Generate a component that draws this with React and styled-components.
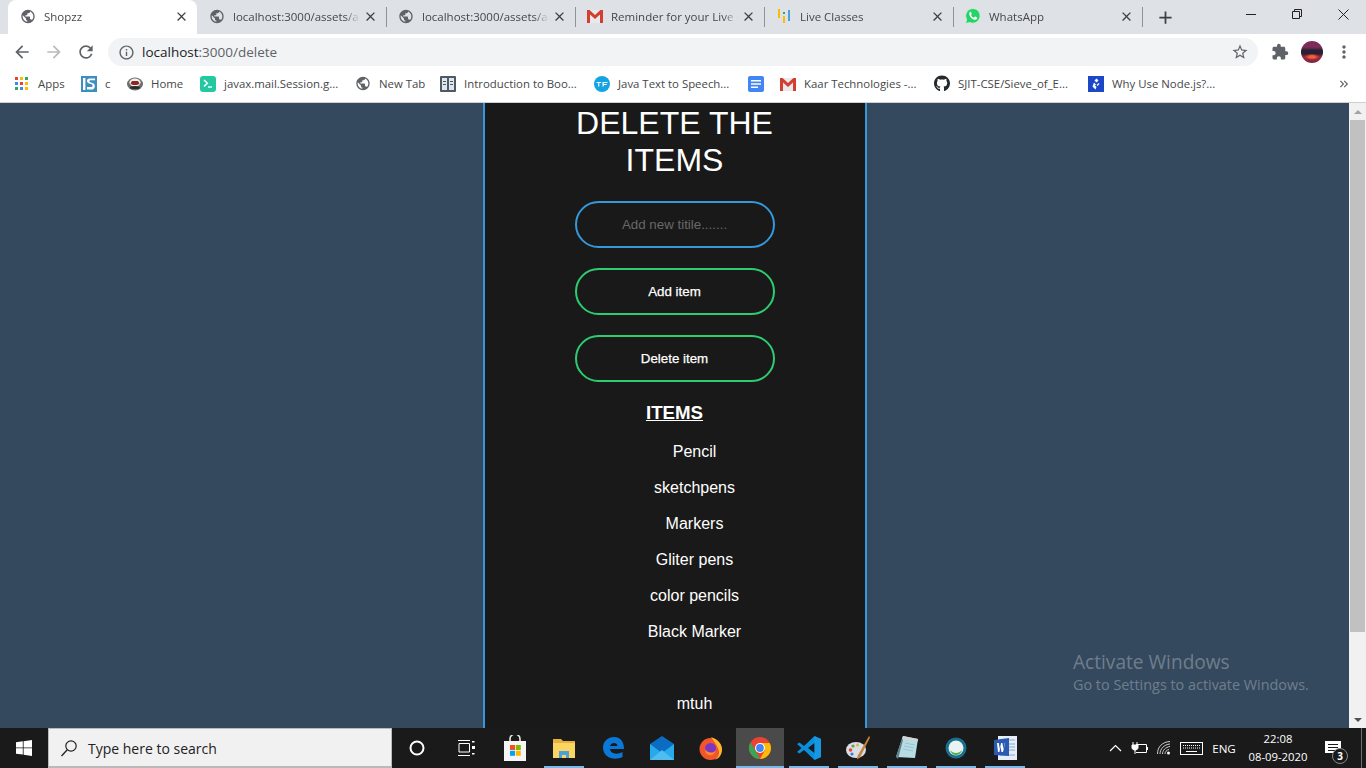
import styled, { createGlobalStyle } from 'styled-components';
import {
  MdPublic, MdClose, MdAdd, MdArrowBack, MdArrowForward, MdRefresh, MdInfoOutline,
  MdStarBorder, MdExtension, MdMoreVert, MdKeyboardDoubleArrowRight,
} from 'react-icons/md';
import { FaGithub } from 'react-icons/fa';

const GlobalStyle = createGlobalStyle`
  html, body { margin: 0; padding: 0; height: 100%; overflow: hidden; }
  #root { height: 100%; }
  * { box-sizing: border-box; }
`;

const uiFont = `'Open Sans', 'Noto Sans', sans-serif`;
const pageFont = `'Liberation Sans', Arial, sans-serif`;

const Screen = styled.div`
  height: 100vh;
  display: flex;
  flex-direction: column;
  font-family: ${uiFont};
`;

// ---- tabs ----
const TabStrip = styled.div`
  height: 34px;
  flex: none;
  background: #dee1e6;
  display: flex;
  align-items: stretch;
  padding-left: 8px;
`;

const Tab = styled.div`
  width: 189px;
  flex: none;
  display: flex;
  align-items: center;
  padding: 0 8px 2px 12px;
  position: relative;
  background: ${(p) => (p.$active ? '#fff' : 'transparent')};
  border-radius: ${(p) => (p.$active ? '8px 8px 0 0' : '0')};
  &::after {
    content: '';
    display: ${(p) => (p.$sep ? 'block' : 'none')};
    position: absolute;
    right: -1px;
    top: 7px;
    height: 20px;
    width: 1px;
    background: #8f9296;
  }
`;

const TabIcon = styled.span`
  width: 16px;
  height: 16px;
  flex: none;
  display: flex;
  align-items: center;
  justify-content: center;
  color: #5f6368;
  font-size: 17px;
  margin-right: 8px;
`;

const TabTitle = styled.span`
  flex: 1;
  min-width: 0;
  white-space: nowrap;
  overflow: hidden;
  font-size: 11.5px;
  color: #45474a;
  -webkit-mask-image: linear-gradient(to right, #000 88%, transparent 100%);
  mask-image: linear-gradient(to right, #000 88%, transparent 100%);
`;

const TabClose = styled.span`
  width: 16px;
  height: 16px;
  margin-left: 2px;
  flex: none;
  display: flex;
  align-items: center;
  justify-content: center;
  font-size: 15px;
  color: #3c4043;
`;

const NewTab = styled.div`
  width: 46px;
  display: flex;
  align-items: center;
  justify-content: center;
  font-size: 21px;
  color: #3c4043;
`;

const WindowControls = styled.div`
  margin-left: auto;
  display: flex;
`;

const WinButton = styled.div`
  width: 46px;
  height: 28px;
  display: flex;
  align-items: center;
  justify-content: center;
  color: #222;
`;

// ---- toolbar ----
const Toolbar = styled.div`
  height: 32px;
  flex: none;
  background: #fff;
  display: flex;
  align-items: flex-end;
  padding-left: 6px;
`;

const NavButton = styled.div`
  width: ${(p) => p.$w || 32}px;
  height: 28px;
  flex: none;
  display: flex;
  align-items: center;
  justify-content: center;
  font-size: ${(p) => p.$size || 20}px;
  color: ${(p) => p.$color || '#5f6368'};
`;

const Omnibox = styled.div`
  width: 1150px;
  height: 28px;
  margin-left: 6px;
  margin-right: 6px;
  flex: none;
  border-radius: 14px;
  background: #f1f3f4;
  display: flex;
  align-items: center;
  padding: 0 9px 0 10px;
  color: #5f6368;
`;

const Url = styled.span`
  flex: 1;
  margin-left: 7px;
  font-size: 13.5px;
  color: #5f6368;
  b { font-weight: 400; color: #202124; }
`;

const Avatar = styled.div`
  width: 22px;
  height: 22px;
  border-radius: 50%;
  background:
    radial-gradient(ellipse 7px 3px at 50% 72%, #f0603a 0 40%, transparent 100%),
    linear-gradient(to bottom, #7d2c58 0 28%, #2a2033 42% 58%, #a12a3c 72%, #7c2440 100%);
`;

// ---- bookmarks ----
const BookmarkBar = styled.div`
  height: 37px;
  flex: none;
  background: #fff;
  border-bottom: 1px solid #cfd0d2;
  display: flex;
  align-items: center;
  padding-left: 15px;
  padding-bottom: 1px;
`;

const Bookmark = styled.div`
  width: ${(p) => p.$w}px;
  flex: none;
  display: flex;
  align-items: center;
  gap: 8px;
  font-size: 11.4px;
  color: #45474a;
  white-space: nowrap;
`;

const BookmarkIcon = styled.span`
  width: ${(p) => (p.$narrow ? 15 : 16)}px;
  height: 16px;
  flex: none;
  display: flex;
  align-items: center;
  justify-content: ${(p) => (p.$narrow ? 'flex-start' : 'center')};
  font-size: 17px;
  color: #5f6368;
`;

const MoreBookmarks = styled.div`
  margin-left: auto;
  margin-right: 15px;
  color: #5f6368;
  display: flex;
`;

// ---- page ----
const Viewport = styled.div`
  flex: 1;
  min-height: 0;
  display: flex;
  position: relative;
  background: #34495e;
`;

const Main = styled.main`
  flex: 1;
  min-width: 0;
  overflow: hidden;
  display: flex;
  justify-content: center;
  font-family: ${pageFont};
`;

const Card = styled.div`
  width: 384px;
  min-height: 100%;
  background: #191919;
  border-left: 2px solid #3498db;
  border-right: 2px solid #3498db;
  display: flex;
  flex-direction: column;
  align-items: center;
  color: #fff;
`;

const Title = styled.h1`
  width: 250px;
  margin: 2px 0 22px;
  font-size: 32px;
  line-height: 37px;
  font-weight: 400;
  text-align: center;
`;

const SearchInput = styled.input`
  display: block;
  width: 200px;
  height: 47px;
  margin: 0 0 20px;
  padding: 0 14px 1px;
  background: none;
  border: 2px solid #3498db;
  border-radius: 24px;
  outline: none;
  text-align: center;
  color: #fff;
  font-family: ${pageFont};
  font-size: 13.33px;
  &::placeholder { color: #686868; opacity: 1; }
`;

const ActionButton = styled.button`
  display: block;
  width: 200px;
  height: 47px;
  margin: 0 0 20px;
  padding: 0;
  background: none;
  border: 2px solid #2ecc71;
  border-radius: 24px;
  color: #fff;
  font-family: ${pageFont};
  font-size: 13.33px;
  font-weight: 400;
  -webkit-text-stroke: 0.25px #fff;
`;

const ItemsHeading = styled.h3`
  margin: 0 0 11px;
  font-size: 18.7px;
  line-height: 21px;
  font-weight: 700;
  text-decoration: underline;
`;

const ItemList = styled.ul`
  list-style: none;
  margin: 0;
  padding: 0 0 0 40px;
  width: 100%;
`;

const Item = styled.li`
  height: 36px;
  line-height: 36px;
  font-size: 16px;
  text-align: center;
`;

const Scrollbar = styled.div`
  width: 17px;
  flex: none;
  background: #f1f1f1;
  display: flex;
  flex-direction: column;
  align-items: center;
`;

const ScrollArrow = styled.div`
  height: 17px;
  flex: none;
  display: flex;
  align-items: center;
  justify-content: center;
  &::before {
    content: '';
    border-left: 4px solid transparent;
    border-right: 4px solid transparent;
    ${(p) => (p.$down ? 'border-top: 4px solid #505050;' : 'border-bottom: 4px solid #a3a3a3;')}
  }
`;

const ScrollThumb = styled.div`
  width: 15px;
  height: 512px;
  background: #c1c1c1;
`;

const ScrollTrack = styled.div`
  flex: 1;
`;

const ActivateNote = styled.div`
  position: absolute;
  left: 1073px;
  top: 546px;
  color: rgba(255, 255, 255, 0.3);
  pointer-events: none;
`;

const ActivateTitle = styled.div`
  font-size: 19.1px;
  line-height: 26px;
`;

const ActivateText = styled.div`
  font-size: 14.4px;
  line-height: 19px;
`;

// ---- taskbar ----
const Taskbar = styled.div`
  height: 40px;
  flex: none;
  background: #1a1a1a;
  display: flex;
  align-items: stretch;
`;

const StartButton = styled.div`
  width: 48px;
  flex: none;
  display: flex;
  align-items: center;
  justify-content: center;
`;

const SearchBox = styled.div`
  width: 344px;
  flex: none;
  background: #f1f1f1;
  border: 1px solid #b9b9b9;
  border-bottom-width: 2px;
  display: flex;
  align-items: center;
  padding-left: 11px;
  gap: 10px;
  font-size: 14px;
  color: #222;
  span { padding-top: 2px; }
`;

const TaskList = styled.div`
  display: flex;
  gap: 1px;
  padding-left: 1px;
`;

const TaskItem = styled.div`
  width: 48px;
  position: relative;
  display: flex;
  align-items: center;
  justify-content: center;
  background: ${(p) => (p.$active ? '#4a4a4a' : 'transparent')};
  &::after {
    content: '';
    display: ${(p) => (p.$open ? 'block' : 'none')};
    position: absolute;
    bottom: 0;
    height: 2px;
    left: ${(p) => (p.$active ? 0 : 4)}px;
    right: ${(p) => (p.$active ? 0 : 4)}px;
    background: #76b9ed;
  }
`;

const Tray = styled.div`
  margin-left: auto;
  display: flex;
  align-items: center;
  color: #fff;
`;

const TrayIcon = styled.div`
  width: ${(p) => p.$w}px;
  flex: none;
  display: flex;
  justify-content: center;
  font-size: 11.6px;
`;

const Clock = styled.div`
  width: 68px;
  text-align: center;
  font-size: 11.3px;
  line-height: 18px;
`;

const NotifyWrap = styled.div`
  width: 50px;
  height: 40px;
  position: relative;
  display: flex;
  align-items: center;
  justify-content: flex-start;
  padding-left: 13px;
  border-right: 1px solid #6e6e6e;
  margin-right: 4px;
`;

const NotifyBadge = styled.span`
  position: absolute;
  left: 20px;
  top: 20px;
  width: 16px;
  height: 16px;
  border-radius: 50%;
  background: #1a1a1a;
  border: 1px solid #8a8a8a;
  font-size: 10px;
  font-weight: 700;
  line-height: 14px;
  text-align: center;
`;

// ---- drawn icons ----
const GmailIcon = () => (
  <svg width="16" height="14" viewBox="0 0 16 14">
    <path d="M0 1h16v13H0z" fill="#e9e9e9" />
    <path d="M0 1h2.6L8 6l5.4-5H16v13h-3V5.6L8 10 3 5.6V14H0z" fill="#d23f31" />
  </svg>
);

const LiveIcon = () => (
  <svg width="12" height="14" viewBox="0 0 12 14">
    <path d="M0 0h2v9H0zM5 7h2v7H5z" fill="#fbbc05" />
    <path d="M5 3h2v2H5z" fill="#34a853" />
    <path d="M10 1h2v11h-2z" fill="#4aa3df" />
  </svg>
);

const WhatsAppIcon = () => (
  <svg width="16" height="16" viewBox="0 0 16 16">
    <path d="M8 .5a7.300 7.300 0 0 0-6.300 11L.6 15.500l4.100-1.100A7.300 7.300 0 1 0 8 .5z" fill="#25d366" stroke="#e4f5ea" strokeWidth=".6" />
    <path d="M5.500 3.800c-.5 0-1.300.7-1.300 1.900 0 2.700 3.300 6.100 6 6.100 1.200 0 2-.8 2-1.500 0-.5 0-.7-.3-.9l-1.500-.8c-.3-.1-.4 0-.6.200l-.6.700c-.2.200-.3.200-.6.100-1-.4-2-1.300-2.500-2.300-.1-.2-.1-.3.100-.5l.5-.6c.1-.2.100-.3 0-.5l-.6-1.500c-.1-.3-.3-.4-.6-.4z" fill="#fff" />
  </svg>
);

const AppsIcon = () => {
  const colors = ['#ea4335', '#fbbc05', '#34a853', '#4285f4', '#ea4335', '#fbbc05', '#34a853', '#4285f4', '#fbbc05'];
  return (
    <svg width="13" height="13" viewBox="0 0 13 13">
      {colors.map((c, i) => (
        <rect key={i} x={(i % 3) * 5} y={Math.floor(i / 3) * 5} width="3" height="3" fill={c} />
      ))}
    </svg>
  );
};

const IsIcon = () => (
  <svg width="16" height="16" viewBox="0 0 16 16">
    <path d="M0 0h16v16H0z" fill="#3d8fc0" />
    <path d="M2 2h2.4v12H2z" fill="#fff" />
    <path d="M14 2.500H8.500C6.800 2.500 6 3.600 6 5c0 3.600 5.600 2 5.600 4.400 0 1-.7 1.500-1.800 1.500H6v2.600h4.400c2 0 3.400-1.200 3.400-3.600 0-4-5.400-2.600-5.400-4.700 0-.6.4-.9 1-.9H14z" fill="#fff" />
  </svg>
);

const HomeIcon = () => (
  <svg width="16" height="14" viewBox="0 0 16 14">
    <ellipse cx="8" cy="7" rx="8" ry="6.500" fill="#6d6d6d" />
    <ellipse cx="8" cy="5.500" rx="5.600" ry="4" fill="#f2f2f2" />
    <path d="M3.500 6.500C5 8.500 11 8.500 12.500 6.500L11 4H5z" fill="#8b2a22" />
    <ellipse cx="8" cy="10.500" rx="5" ry="1.600" fill="#2b2b2b" />
  </svg>
);

const TerminalIcon = () => (
  <svg width="16" height="16" viewBox="0 0 16 16">
    <rect width="16" height="16" rx="3" fill="#24c8a0" />
    <path d="M4 4l3.400 3.200L4 10.400" fill="none" stroke="#fff" strokeWidth="1.500" />
    <path d="M8 11h4" stroke="#fff" strokeWidth="1.400" />
  </svg>
);

const BookIcon = () => (
  <svg width="16" height="16" viewBox="0 0 16 16">
    <rect width="16" height="16" rx="1" fill="#4d5a66" />
    <path d="M2 2h5v12H2zM9 2h5v12H9z" fill="#dfe5ea" />
    <path d="M3 5h3v1H3zM3 8h3v1H3zM10 5h3v1h-3zM10 8h3v1h-3z" fill="#4d5a66" />
  </svg>
);

const TfIcon = () => (
  <svg width="16" height="16" viewBox="0 0 16 16">
    <circle cx="8" cy="8" r="8" fill="#15a4e3" />
    <path d="M2.500 6h4.600v1H5.300v3.400H4.200V7H2.500zM8.500 6h5v1H9.700v1h3v1h-3v1.400H8.500z" fill="#fff" />
  </svg>
);

const DocsIcon = () => (
  <svg width="16" height="16" viewBox="0 0 16 16">
    <rect width="16" height="16" rx="2" fill="#4285f4" />
    <path d="M3 4h10v1.500H3zM3 7.300h10v1.500H3zM3 10.600h7v1.500H3z" fill="#fff" />
  </svg>
);

const NodeIcon = () => (
  <svg width="16" height="16" viewBox="0 0 16 16">
    <rect width="16" height="16" fill="#1c47c7" />
    <path d="M8.500 2.500l2 2-2 2-2-2zM6 6.500l2 2-1 1 1.500 1.500-1 2.500L4.500 10.500zM10.500 7l1 1-2 2-1-1z" fill="#fff" />
  </svg>
);

const WindowsLogo = () => (
  <svg width="16" height="16" viewBox="0 0 16 16">
    <path d="M0 2.300l6.800-1v6.200H0zM7.600 1.200L16 0v7.500H7.600zM0 8.300h6.800v6.300L0 13.700zM7.600 8.300H16V16l-8.400-1.200z" fill="#fff" />
  </svg>
);

const SearchGlass = () => (
  <svg width="18" height="18" viewBox="0 0 18 18">
    <circle cx="11" cy="7" r="5.200" fill="none" stroke="#222" strokeWidth="1.200" />
    <path d="M7.300 10.800L1.500 17" stroke="#222" strokeWidth="1.300" />
  </svg>
);

const CortanaIcon = () => (
  <svg width="16" height="16" viewBox="0 0 16 16">
    <circle cx="8" cy="8" r="6.500" fill="none" stroke="#fff" strokeWidth="2" />
  </svg>
);

const TaskViewIcon = () => (
  <svg width="17" height="16" viewBox="0 0 17 16">
    <path d="M0 .5h12M0 15.500h12M1 3.500h10.500v8.500H1z" fill="none" stroke="#fff" />
    <path d="M14 1h2.500v1.500H14zM14 6h3v3h-3zM14 13h2.500v1.500H14z" fill="#fff" />
  </svg>
);

const StoreIcon = () => (
  <svg width="24" height="26" viewBox="0 0 24 26">
    <path d="M7 8V4a5 5 0 0 1 10 0v4" fill="none" stroke="#e8e8e8" strokeWidth="1.600" />
    <path d="M1 6h22v20H1z" fill="#f5f5f5" />
    <path d="M7 10h5v5H7z" fill="#f25022" />
    <path d="M12.800 10h5v5h-5z" fill="#7fba00" />
    <path d="M7 15.800h5v5H7z" fill="#00a4ef" />
    <path d="M12.800 15.800h5v5h-5z" fill="#ffb900" />
  </svg>
);

const FolderIcon = () => (
  <svg width="22" height="20" viewBox="0 0 22 20">
    <path d="M0 1h8l2 2h12v17H0z" fill="#e8b13c" />
    <path d="M0 5h22v15H0z" fill="#fbd561" />
    <path d="M6 13h10v7h-3v-3H9v3H6z" fill="#4aa0d8" />
  </svg>
);

const EdgeIcon = () => (
  <svg width="21" height="22" viewBox="0 0 21 22">
    <path d="M0 11C0 4 5 0 11 0c6 0 10 4 10 12H7c.300 4 6 6.500 12.500 3v5c-8 4-19 1-19.500-9zM7 9h7.500C14 5 8 5 7 9z" fill="#0a78d7" />
  </svg>
);

const MailIcon = () => (
  <svg width="24" height="24" viewBox="0 0 24 24">
    <path d="M0 8L12 0l12 8v16H0z" fill="#0a6dc2" />
    <path d="M0 8l12 9 12-9v16H0z" fill="#29a8ea" />
    <path d="M0 24l12-10 12 10z" fill="#50bdf2" />
  </svg>
);

const FirefoxIcon = () => (
  <svg width="24" height="24" viewBox="0 0 24 24">
    <circle cx="11.500" cy="13" r="11" fill="#f2552c" />
    <path d="M12 1c6 2 12 7 11 14-.700 5-4 8-7 8.600 3-2 4.500-5 4-8C19 10 15 6 12 1z" fill="#ffb52e" />
    <circle cx="11.500" cy="12.500" r="5.500" fill="#7b36c4" />
    <path d="M6 13c2 4 8 5 11 1-1 4-4 6-7 5-3-.500-4-3-4-6z" fill="#ff8a2b" />
  </svg>
);

const ChromeIcon = () => (
  <svg width="22" height="22" viewBox="0 0 22 22">
    <circle cx="11" cy="11" r="11" fill="#ea4335" />
    <path d="M1.500 5.500L6.500 14 11 22C5 22 0 17 0 11c0-2 .500-3.800 1.500-5.500z" fill="#34a853" />
    <path d="M11 6h9.600C21.500 7.500 22 9.200 22 11c0 6-5 11-11 11l5-9z" fill="#fbbc05" />
    <circle cx="11" cy="11" r="5" fill="#fff" />
    <circle cx="11" cy="11" r="3.900" fill="#4285f4" />
  </svg>
);

const VsCodeIcon = () => (
  <svg width="24" height="24" viewBox="0 0 24 24">
    <path d="M17.500 0L24 3v18l-6.500 3L7 14l-4.500 3.500L0 16l4.500-4L0 8l2.500-1.500L7 10zM17.500 7L11 12l6.500 5z" fill="#0a8fdc" />
    <path d="M17.500 0L24 3v18l-6.500 3z" fill="#1f9fe8" fillOpacity=".6" />
  </svg>
);

const PaintIcon = () => (
  <svg width="24" height="24" viewBox="0 0 24 24">
    <ellipse cx="10" cy="14" rx="10" ry="8" fill="#d8dfe6" />
    <circle cx="4.500" cy="14" r="1.800" fill="#e04a3a" />
    <circle cx="7" cy="10" r="1.600" fill="#5aa74a" />
    <circle cx="11.500" cy="9" r="1.600" fill="#e9b53a" />
    <circle cx="6" cy="18" r="1.600" fill="#3d7bd0" />
    <path d="M23 0l1 1.500-10 20-3 2 .500-3.600z" fill="#c8823a" />
  </svg>
);

const NotepadIcon = () => (
  <svg width="22" height="24" viewBox="0 0 22 24">
    <path d="M7 0l15 3-3 19L0 21z" fill="#b6dde4" />
    <path d="M7 0l15 3-.500 2.400L6 2.400z" fill="#d4d4d4" />
    <path d="M6 2.400L0 21l2 2L7 4z" fill="#5f7f88" />
    <path d="M9 7l10 2M8 10l10 2M7 13l10 2" stroke="#8fbcc6" strokeWidth=".7" />
  </svg>
);

const CircleAppIcon = () => (
  <svg width="22" height="22" viewBox="0 0 22 22">
    <circle cx="11" cy="11" r="10.500" fill="#1a6e8e" />
    <circle cx="11" cy="11" r="7.500" fill="#e9f3f2" />
    <path d="M5 13c3 4 9 4 12 0-1 3.500-3 5-6 5s-5-2-6-5z" fill="#4caf50" />
  </svg>
);

const WordIcon = () => (
  <svg width="23" height="24" viewBox="0 0 23 24">
    <path d="M4 0h19v24H4z" fill="#e8eef7" />
    <path d="M6 4h15M13 8h8M13 11h8M13 14h8M6 19h15" stroke="#8aa6d0" />
    <path d="M0 4l15-2v18L0 19z" fill="#2a5bb0" />
    <path d="M3 7h1.800l1 6 1.300-6h1.200l1.300 6 1-6H11l-2 9H7.500L6.500 10.500 5.400 16H4z" fill="#fff" />
  </svg>
);

const BatteryIcon = () => (
  <svg width="17" height="14" viewBox="0 0 17 14">
    <path d="M5 3.500h10.500v8H5" fill="none" stroke="#fff" />
    <path d="M16 6h1v3h-1z" fill="#fff" />
    <path d="M1 4h6v3.500L5 9H3L1 7.500zM2 1v3M6 1v3M4 9v4" fill="#fff" stroke="#fff" />
  </svg>
);

const WifiIcon = () => (
  <svg width="14" height="14" viewBox="0 0 14 14">
    <path d="M.500 13C.500 6 5 1 13 .500M3 13c0-5 4-9.500 10-10M5.500 13c0-3.500 3-7 7.500-7.500M8 13c0-2 1.500-4 4-4.500" fill="none" stroke="#cfcfcf" />
    <circle cx="11.500" cy="12" r="1.500" fill="#fff" />
  </svg>
);

const KeyboardIcon = () => (
  <svg width="23" height="13" viewBox="0 0 23 13">
    <rect x=".5" y=".5" width="22" height="12" fill="none" stroke="#fff" />
    <path d="M3 3.500h17M3 6h17" stroke="#fff" strokeDasharray="1 1" />
    <path d="M6 9.500h11" stroke="#fff" />
  </svg>
);

const CaretIcon = () => (
  <svg width="13" height="8" viewBox="0 0 13 8">
    <path d="M1 7l5.500-5.500L12 7" fill="none" stroke="#fff" strokeWidth="1.200" />
  </svg>
);

const NotifyIcon = () => (
  <svg width="16" height="15" viewBox="0 0 16 15">
    <path d="M0 0h16v12h-4l-3 3v-3H0z" fill="#fff" />
    <path d="M3 3.500h10M3 6.500h10M3 9.500h7" stroke="#1a1a1a" />
  </svg>
);

const tabs = [
  { title: 'Shopzz', icon: <MdPublic />, active: true },
  { title: 'localhost:3000/assets/add', icon: <MdPublic />, sep: true },
  { title: 'localhost:3000/assets/add', icon: <MdPublic />, sep: true },
  { title: 'Reminder for your Live Class', icon: <GmailIcon />, sep: true },
  { title: 'Live Classes', icon: <LiveIcon />, sep: true },
  { title: 'WhatsApp', icon: <WhatsAppIcon />, sep: true },
];

const bookmarks = [
  { w: 66, icon: <AppsIcon />, label: 'Apps', narrow: true },
  { w: 46, icon: <IsIcon />, label: 'c' },
  { w: 73, icon: <HomeIcon />, label: 'Home' },
  { w: 155, icon: <TerminalIcon />, label: 'javax.mail.Session.g...' },
  { w: 85, icon: <MdPublic />, label: 'New Tab' },
  { w: 154, icon: <BookIcon />, label: 'Introduction to Boo...' },
  { w: 154, icon: <TfIcon />, label: 'Java Text to Speech...' },
  { w: 32, icon: <DocsIcon />, label: '' },
  { w: 154, icon: <GmailIcon />, label: 'Kaar Technologies -...' },
  { w: 154, icon: <FaGithub color="#24292e" />, label: 'SJIT-CSE/Sieve_of_E...' },
  { w: 154, icon: <NodeIcon />, label: 'Why Use Node.js?...' },
];

const items = ['Pencil', 'sketchpens', 'Markers', 'Gliter pens', 'color pencils', 'Black Marker', '', 'mtuh'];

const taskItems = [
  { icon: <CortanaIcon /> },
  { icon: <TaskViewIcon /> },
  { icon: <StoreIcon /> },
  { icon: <FolderIcon />, open: true },
  { icon: <EdgeIcon /> },
  { icon: <MailIcon /> },
  { icon: <FirefoxIcon /> },
  { icon: <ChromeIcon />, open: true, active: true },
  { icon: <VsCodeIcon />, open: true },
  { icon: <PaintIcon />, open: true },
  { icon: <NotepadIcon />, open: true },
  { icon: <CircleAppIcon />, open: true },
  { icon: <WordIcon />, open: true },
];

const App = () => {
  return (
    <Screen>
      <GlobalStyle />
      <TabStrip>
        {tabs.map((t, i) => (
          <Tab key={i} $active={t.active} $sep={t.sep}>
            <TabIcon>{t.icon}</TabIcon>
            <TabTitle>{t.title}</TabTitle>
            <TabClose><MdClose /></TabClose>
          </Tab>
        ))}
        <NewTab><MdAdd /></NewTab>
        <WindowControls>
          <WinButton>
            <svg width="10" height="1"><path d="M0 .5h10" stroke="#222" /></svg>
          </WinButton>
          <WinButton>
            <svg width="10" height="10"><path d="M.5 2.500h7v7h-7zM2.500 2.500v-2h7v7h-2" fill="none" stroke="#222" /></svg>
          </WinButton>
          <WinButton>
            <svg width="11" height="11"><path d="M.5.500l10 10M10.500.500l-10 10" stroke="#222" /></svg>
          </WinButton>
        </WindowControls>
      </TabStrip>

      <Toolbar>
        <NavButton><MdArrowBack /></NavButton>
        <NavButton $color="#b9bbbe"><MdArrowForward /></NavButton>
        <NavButton><MdRefresh /></NavButton>
        <Omnibox>
          <MdInfoOutline size={17} />
          <Url><b>localhost</b>:3000/delete</Url>
          <MdStarBorder size={18} />
        </Omnibox>
        <NavButton $w={32} $size={18}><MdExtension /></NavButton>
        <NavButton $w={32}><Avatar /></NavButton>
        <NavButton $w={32}><MdMoreVert /></NavButton>
      </Toolbar>

      <BookmarkBar>
        {bookmarks.map((b, i) => (
          <Bookmark key={i} $w={b.w}>
            <BookmarkIcon $narrow={b.narrow}>{b.icon}</BookmarkIcon>
            {b.label && <span>{b.label}</span>}
          </Bookmark>
        ))}
        <MoreBookmarks>
          <MdKeyboardDoubleArrowRight size={14} />
        </MoreBookmarks>
      </BookmarkBar>

      <Viewport>
        <Main>
          <Card>
            <Title>DELETE THE ITEMS</Title>
            <SearchInput placeholder="Add new titile......." />
            <ActionButton>Add item</ActionButton>
            <ActionButton>Delete item</ActionButton>
            <ItemsHeading>ITEMS</ItemsHeading>
            <ItemList>
              {items.map((item, i) => (
                <Item key={i}>{item}</Item>
              ))}
            </ItemList>
          </Card>
        </Main>
        <Scrollbar>
          <ScrollArrow />
          <ScrollThumb />
          <ScrollTrack />
          <ScrollArrow $down />
        </Scrollbar>
        <ActivateNote>
          <ActivateTitle>Activate Windows</ActivateTitle>
          <ActivateText>Go to Settings to activate Windows.</ActivateText>
        </ActivateNote>
      </Viewport>

      <Taskbar>
        <StartButton><WindowsLogo /></StartButton>
        <SearchBox>
          <SearchGlass />
          <span>Type here to search</span>
        </SearchBox>
        <TaskList>
          {taskItems.map((t, i) => (
            <TaskItem key={i} $open={t.open} $active={t.active}>{t.icon}</TaskItem>
          ))}
        </TaskList>
        <Tray>
          <TrayIcon $w={26}><CaretIcon /></TrayIcon>
          <TrayIcon $w={22}><BatteryIcon /></TrayIcon>
          <TrayIcon $w={28}><WifiIcon /></TrayIcon>
          <TrayIcon $w={26}><KeyboardIcon /></TrayIcon>
          <TrayIcon $w={40}>ENG</TrayIcon>
          <Clock>
            <div>22:08</div>
            <div>08-09-2020</div>
          </Clock>
          <NotifyWrap>
            <NotifyIcon />
            <NotifyBadge>3</NotifyBadge>
          </NotifyWrap>
        </Tray>
      </Taskbar>
    </Screen>
  );
};

export default App;
